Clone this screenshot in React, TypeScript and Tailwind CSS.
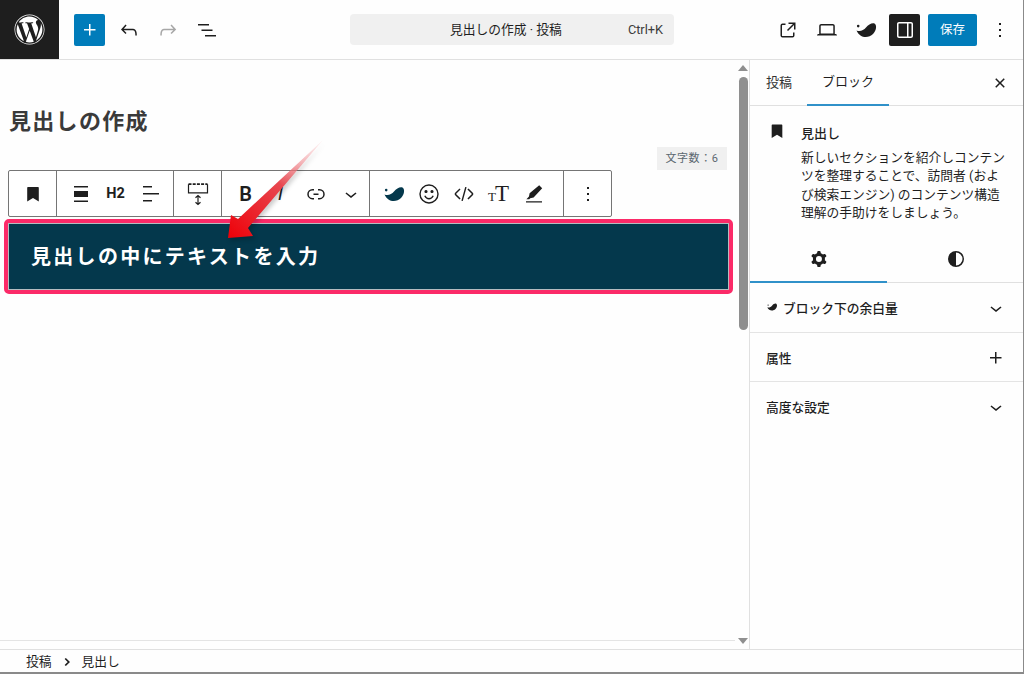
import type { ReactNode } from "react";
import { FaWordpress } from "react-icons/fa";

function Icon({ d, className = "w-6 h-6", evenodd }: { d: string; className?: string; evenodd?: boolean }) {
  return (
    <svg viewBox="0 0 24 24" fill="currentColor" className={className}>
      <path d={d} fillRule={evenodd ? "evenodd" : undefined} clipRule={evenodd ? "evenodd" : undefined} />
    </svg>
  );
}

const icons = {
  plus: "M11 12.5V17.5H12.5V12.5H17.5V11H12.5V6H11V11H6V12.5H11Z",
  undo: "M18.3 11.7c-.6-.6-1.4-.9-2.3-.9H6.7l2.9-3.3-1.1-1-4.5 5L8.5 16l1-1-2.7-2.7H16c.5 0 .9.2 1.3.5 1 1 1 3.4 1 4.5v.3h1.5v-.2c0-1.5 0-4.3-1.5-5.7z",
  redo: "M15.6 6.5l-1.1 1 2.9 3.3H8c-.9 0-1.7.3-2.3.9-1.4 1.5-1.4 4.2-1.4 5.6v.2h1.5v-.3c0-1.1 0-3.5 1-4.5.3-.3.7-.5 1.3-.5h9.2L14.5 15l1.1 1.1 4.6-4.6-4.6-5z",
  list: "M3 6h11v1.5H3V6zm3.5 5.5h11V13h-11v-1.5zM21 17H10v1.5h11V17z",
  external: "M19.5 4.5h-7V6h4.44l-5.97 5.97 1.06 1.06L18 7.06v4.44h1.5v-7Zm-13 1a2 2 0 0 0-2 2v10a2 2 0 0 0 2 2h10a2 2 0 0 0 2-2v-3H17v3a.5.5 0 0 1-.5.5h-10a.5.5 0 0 1-.5-.5v-10a.5.5 0 0 1 .5-.5h3V5.5h-3Z",
  laptop: "M20.5 16h-.7V8c0-1.1-.9-2-2-2H6.2c-1.1 0-2 .9-2 2v8h-.7c-.8 0-1.5.7-1.5 1.5h20c0-.8-.7-1.5-1.5-1.5zM5.7 8c0-.3.2-.5.5-.5h11.6c.3 0 .5.2.5.5v7.6H5.7V8z",
  sidebar: "M18 4H6c-1.1 0-2 .9-2 2v12c0 1.1.9 2 2 2h12c1.1 0 2-.9 2-2V6c0-1.1-.9-2-2-2zm-4 14.5H6c-.3 0-.5-.2-.5-.5V6c0-.3.2-.5.5-.5h8v13zm4.5-.5c0 .3-.2.5-.5.5h-2.5v-13H18c.3 0 .5.2.5.5v12z",
  dots: "M13 19h-2v-2h2v2zm0-6h-2v-2h2v2zm0-6h-2V5h2v2z",
  close: "M12 13.06l3.712 3.713 1.061-1.06L13.061 12l3.712-3.712-1.06-1.06L12 10.938 8.288 7.227l-1.061 1.06L10.939 12l-3.712 3.712 1.06 1.061L12 13.061z",
  bookmark: "M7 5h10a.8.8 0 0 1 .8.8V19.5L12 16l-5.8 3.5V5.8A.8.8 0 0 1 7 5z",
  chevron: "M17.5 11.6L12 16l-5.5-4.4.9-1.2L12 14l4.5-3.6 1 1.2z",
  gear: "M10.289 4.836A1 1 0 0 1 11.275 4h1.306a1 1 0 0 1 .987.836l.244 1.466c.787.26 1.503.679 2.108 1.218l1.393-.522a1 1 0 0 1 1.216.437l.653 1.13a1 1 0 0 1-.23 1.273l-1.148.944a6.025 6.025 0 0 1 0 2.435l1.149.946a1 1 0 0 1 .23 1.272l-.653 1.13a1 1 0 0 1-1.216.437l-1.394-.522c-.605.54-1.32.958-2.108 1.218l-.244 1.466a1 1 0 0 1-.987.836h-1.306a1 1 0 0 1-.986-.836l-.244-1.466a5.995 5.995 0 0 1-2.108-1.218l-1.394.522a1 1 0 0 1-1.217-.436l-.653-1.131a1 1 0 0 1 .23-1.272l1.149-.946a6.026 6.026 0 0 1 0-2.435l-1.148-.944a1 1 0 0 1-.23-1.272l.653-1.131a1 1 0 0 1 1.217-.437l1.393.522a5.994 5.994 0 0 1 2.108-1.218l.244-1.466ZM14.929 12a3 3 0 1 1-6 0 3 3 0 0 1 6 0Z",
  contrast: "M12 4a8 8 0 1 0 0 16 8 8 0 0 0 0-16Zm0 1.5a6.5 6.5 0 0 1 0 13v-13Z",
  alignNone: "M19 5.5H5V4h14v1.5ZM19 20H5v-1.5h14V20ZM5 9h14v6H5V9Z",
  alignLeft: "M13 5.5H4V4h9v1.5Zm7 7H4V11h16v1.5Zm-7 7H4V18h9v1.5Z",
  link: "M10 17.389H8.444A5.194 5.194 0 1 1 8.444 7H10v1.5H8.444a3.694 3.694 0 0 0 0 7.389H10v1.5ZM14 7h1.556a5.194 5.194 0 0 1 0 10.39H14v-1.5h1.556a3.694 3.694 0 0 0 0-7.39H14V7Zm-4.5 6h5v-1.5h-5V13Z",
  code: "M20.8 10.7l-4.3-4.3-1.1 1.1 4.3 4.3c.1.1.1.3 0 .4l-4.3 4.3 1.1 1.1 4.3-4.3c.7-.8.7-1.9 0-2.6zM4.2 11.8l4.3-4.3-1-1-4.3 4.3c-.7.7-.7 1.8 0 2.5l4.3 4.3 1.1-1.1-4.3-4.3c-.2-.1-.2-.3-.1-.4zM13.2 5l1.4.3-3.8 13.7-1.4-.3z",
  highlight: "M17.2 3.2l3 3-8.6 9.4-3.4.7-.9 1H4.4l2.6-2.7.6-3.4zM4 19.2h16v1.4H4z",
  blob: "M2.5 12.5C6 14 9.5 12.5 12 9.5 14.5 6.5 18 4.5 20.5 5.5 23 7 22.5 12.5 19 16 14.5 20.5 6 20.5 2.5 12.5ZM4.2 6.8a1.3 1.3 0 1 1 0 2.6 1.3 1.3 0 0 1 0-2.6Z",
};

function TopButton({ children, className = "text-[#1e1e1e]" }: { children: ReactNode; className?: string }) {
  return <div className={`w-[39px] h-8 flex items-center justify-center ${className}`}>{children}</div>;
}

function ToolBtn({ children }: { children: ReactNode }) {
  return <div className="w-[35px] h-full flex items-center justify-center text-[#1e1e1e] shrink-0">{children}</div>;
}

function Segment({ className, children }: { className: string; children: ReactNode }) {
  return <div className={`h-full flex pl-[6px] border-r border-[#757575] last:border-r-0 shrink-0 ${className}`}>{children}</div>;
}

function PanelRow({ label, blob, plus, className }: { label: string; blob?: boolean; plus?: boolean; className: string }) {
  return (
    <div className={`pl-4 pr-4 flex items-center justify-between text-[12.75px] font-medium text-[#1e1e1e] ${className}`}>
      <div className="flex items-center pt-[2px]">
        {blob && <Icon d={icons.blob} className="w-3 h-3 mr-[5px] -mt-[4px]" />}
        <span>{label}</span>
      </div>
      <Icon d={plus ? icons.plus : icons.chevron} className="w-6 h-6 -mr-[1px]" />
    </div>
  );
}

export default function App() {
  return (
    <div className="w-[1024px] h-[674px] overflow-hidden bg-[#fefefe] flex flex-col border-r border-b-2 border-[#8a8a8a] font-['Roboto','Noto_Sans_CJK_JP',sans-serif] text-[#1e1e1e]">
      {/* top bar */}
      <header className="h-[60px] shrink-0 border-b border-[#e0e0e0] grid grid-cols-[350px_324px_1fr] items-center">
        <div className="flex items-center h-[59px]">
          <div className="w-[59px] h-[59px] bg-[#1e1e1e] text-white flex items-center justify-center">
            <FaWordpress className="w-[31px] h-[31px]" />
          </div>
          <div className="ml-[15px] w-[31px] h-[32px] rounded-[2px] bg-[#007cba] text-white flex items-center justify-center">
            <Icon d={icons.plus} />
          </div>
          <div className="ml-[4px] flex">
            <TopButton><Icon d={icons.undo} /></TopButton>
            <TopButton className="text-[#a7a7a7]"><Icon d={icons.redo} /></TopButton>
            <TopButton><Icon d={icons.list} /></TopButton>
          </div>
        </div>
        <div className="h-[31px] rounded-[4px] bg-[#f0f0f0] flex items-center pt-[1px] text-[12.75px] text-[#1e1e1e]">
          <span className="ml-[100px]">見出しの作成 · 投稿</span>
          <span className="ml-auto mr-[11px] text-[#3c3c3c]">Ctrl+K</span>
        </div>
        <div className="flex items-center justify-end pr-[7px]">
          <TopButton><Icon d={icons.external} /></TopButton>
          <TopButton><Icon d={icons.laptop} /></TopButton>
          <TopButton><Icon d={icons.blob} /></TopButton>
          <div className="ml-[4px] w-[31px] h-[32px] rounded-[2px] bg-[#1e1e1e] text-white flex items-center justify-center">
            <Icon d={icons.sidebar} />
          </div>
          <div className="ml-[8px] w-[49px] h-[32px] pt-[2px] rounded-[2px] bg-[#007cba] text-white text-[12.5px] flex items-center justify-center">
            保存
          </div>
          <div className="ml-[7px] w-8 h-8 flex items-center justify-center">
            <Icon d={icons.dots} />
          </div>
        </div>
      </header>

      <div className="flex-1 flex min-h-0">
        {/* editor */}
        <div className="w-[750px] shrink-0 flex border-r border-[#e0e0e0]">
          <div className="relative w-[735px] shrink-0 border-b border-[#e4e4e4] mb-[8px]">
            <h1 className="mt-[49px] ml-[9px] text-[22px] leading-[26px] font-bold text-[#3a3a3a] tracking-[1.3px]">見出しの作成</h1>
            <div className="mt-[12px] flex justify-end pr-[8px]">
              <div className="w-[70px] h-[23px] pt-[1px] bg-[#f0f0f0] text-[11px] tracking-[0.6px] text-[#5c6870] flex items-center justify-center">文字数：6</div>
            </div>
            <div className="ml-[8px] w-[604px] h-[47px] border border-[#757575] rounded-[2px] bg-white flex">
              <Segment className="w-[48px]"><ToolBtn><Icon d={icons.bookmark} /></ToolBtn></Segment>
              <Segment className="w-[117px]">
                <ToolBtn><Icon d={icons.alignNone} /></ToolBtn>
                <ToolBtn><span className="text-[14.5px] font-bold">H2</span></ToolBtn>
                <ToolBtn><Icon d={icons.alignLeft} /></ToolBtn>
              </Segment>
              <Segment className="w-[48px]">
                <ToolBtn>
                  <svg viewBox="0 0 24 24" className="w-6 h-6" fill="none" stroke="currentColor" strokeWidth="1.2">
                    <path d="M2.5 2.2h19" strokeWidth="1.8" strokeDasharray="3 1.2" />
                    <path d="M2.5 2.2v8.6h19V2.2" />
                    <path d="M12 13.5v9M9.5 15.8l2.5-2.3 2.5 2.3M9.5 20.2l2.5 2.3 2.5-2.3" />
                  </svg>
                </ToolBtn>
              </Segment>
              <Segment className="w-[148px]">
                <ToolBtn><span className="text-[20px] font-semibold leading-none">B</span></ToolBtn>
                <ToolBtn><span className="text-[19px] italic font-medium leading-none font-['Liberation_Sans',sans-serif]">I</span></ToolBtn>
                <ToolBtn><Icon d={icons.link} /></ToolBtn>
                <ToolBtn><Icon d={icons.chevron} /></ToolBtn>
              </Segment>
              <Segment className="w-[194px]">
                <ToolBtn><span className="text-[#04384c]"><Icon d={icons.blob} /></span></ToolBtn>
                <ToolBtn>
                  <svg viewBox="0 0 24 24" className="w-6 h-6" fill="none" stroke="currentColor" strokeWidth="1.4">
                    <circle cx="12" cy="12" r="9" />
                    <path d="M7.8 13.8c1 2 2.5 3 4.2 3s3.2-1 4.2-3" />
                    <circle cx="9" cy="9.5" r="0.9" fill="currentColor" />
                    <circle cx="15" cy="9.5" r="0.9" fill="currentColor" />
                  </svg>
                </ToolBtn>
                <ToolBtn><Icon d={icons.code} /></ToolBtn>
                <ToolBtn>
                  <span className="font-['Liberation_Serif',serif] leading-none flex items-end">
                    <span className="text-[13px] leading-[15px]">T</span>
                    <span className="text-[23px] leading-[21px] -ml-[1px]">T</span>
                  </span>
                </ToolBtn>
                <ToolBtn><Icon d={icons.highlight} /></ToolBtn>
              </Segment>
              <Segment className="w-[48px]"><ToolBtn><Icon d={icons.dots} /></ToolBtn></Segment>
            </div>
            {/* selected heading block */}
            <div className="mt-[2px] ml-[4px] w-[729px] h-[75px] rounded-[5px] border-[4px] border-[#fb2a68] bg-white">
              <div className="h-full border border-[#b5bcc0] bg-[#04384c] flex items-center pl-[22px] text-white text-[20px] font-bold tracking-[2.3px]">
                見出しの中にテキストを入力
              </div>
            </div>
            {/* annotation arrow */}
            <svg className="absolute left-[220px] top-[75px] w-[110px] h-[110px] overflow-visible" viewBox="0 0 110 110" style={{ filter: "drop-shadow(2px 3px 2px rgba(0,0,0,0.2))" }}>
              <defs>
                <linearGradient id="arrowFill" x1="103" y1="5" x2="8" y2="103" gradientUnits="userSpaceOnUse">
                  <stop offset="0" stopColor="#f8c4c8" stopOpacity="0.2" />
                  <stop offset="0.45" stopColor="#e84850" />
                  <stop offset="1" stopColor="#ee0008" />
                </linearGradient>
              </defs>
              <polygon points="103,5 28,93 33,101 8,103 11,80 18,84" fill="url(#arrowFill)" />
            </svg>
          </div>
          {/* scrollbar */}
          <div className="w-[14px] shrink-0 flex flex-col items-center pt-[5px] pb-[5px] pl-[2px]">
            <div className="w-0 h-0 border-x-[5px] border-x-transparent border-b-[6px] border-b-[#8f8f8f]" />
            <div className="mt-[6px] w-[9px] h-[253px] rounded-full bg-[#8f8f8f]" />
            <div className="mt-auto w-0 h-0 border-x-[5px] border-x-transparent border-t-[6px] border-t-[#8f8f8f]" />
          </div>
        </div>

        {/* sidebar */}
        <aside className="flex-1 min-w-0">
          <div className="h-[46px] border-b border-[#e0e0e0] flex items-stretch text-[13px] relative">
            <div className="pl-4 w-[57px] flex items-center text-[#333]">投稿</div>
            <div className="w-[82px] flex items-center justify-center text-[#1e1e1e] border-b-[2px] border-[#3091c9] -mb-[1px]">ブロック</div>
            <div className="ml-auto mr-[11px] flex items-center">
              <Icon d={icons.close} />
            </div>
          </div>
          <div className="pl-[16px] pt-[15px] pr-[6px] flex h-[134px]">
            <Icon d={icons.bookmark} className="w-[22px] h-[22px] mr-[13px] shrink-0 -mt-[1px]" />
            <div>
              <div className="text-[13px] font-medium leading-[25px]">見出し</div>
              <p className="mt-[3px] text-[12.75px] leading-[18.4px] text-[#1e1e1e] whitespace-nowrap">
                新しいセクションを紹介しコンテン<br />
                ツを整理することで、訪問者 (およ<br />
                び検索エンジン) のコンテンツ構造<br />
                理解の手助けをしましょう。
              </p>
            </div>
          </div>
          <div className="h-[43px] flex border-b border-[#e0e0e0]">
            <div className="w-[137px] flex items-center justify-center pb-[4px] border-b-[2px] border-[#3091c9] -mb-[1px]">
              <Icon d={icons.gear} evenodd />
            </div>
            <div className="flex-1 flex items-center justify-center pb-[4px] pl-[2px]">
              <Icon d={icons.contrast} evenodd />
            </div>
          </div>
          <PanelRow label="ブロック下の余白量" blob className="h-[50px] border-b border-[#e4e4e4]" />
          <PanelRow label="属性" plus className="h-[49px] pt-[1px] border-b border-[#e4e4e4]" />
          <PanelRow label="高度な設定" className="h-[50px]" />
        </aside>
      </div>

      {/* breadcrumb */}
      <footer className="h-[23px] shrink-0 border-t border-[#e0e0e0] flex items-center pt-[2px] pl-[26px] text-[12.75px] text-[#1e1e1e]">
        <span>投稿</span>
        <svg viewBox="0 0 24 24" className="w-[14px] h-[14px] mx-[8px]" fill="none" stroke="currentColor" strokeWidth="3">
          <path d="M9 6l6 6-6 6" />
        </svg>
        <span>見出し</span>
      </footer>
    </div>
  );
}
